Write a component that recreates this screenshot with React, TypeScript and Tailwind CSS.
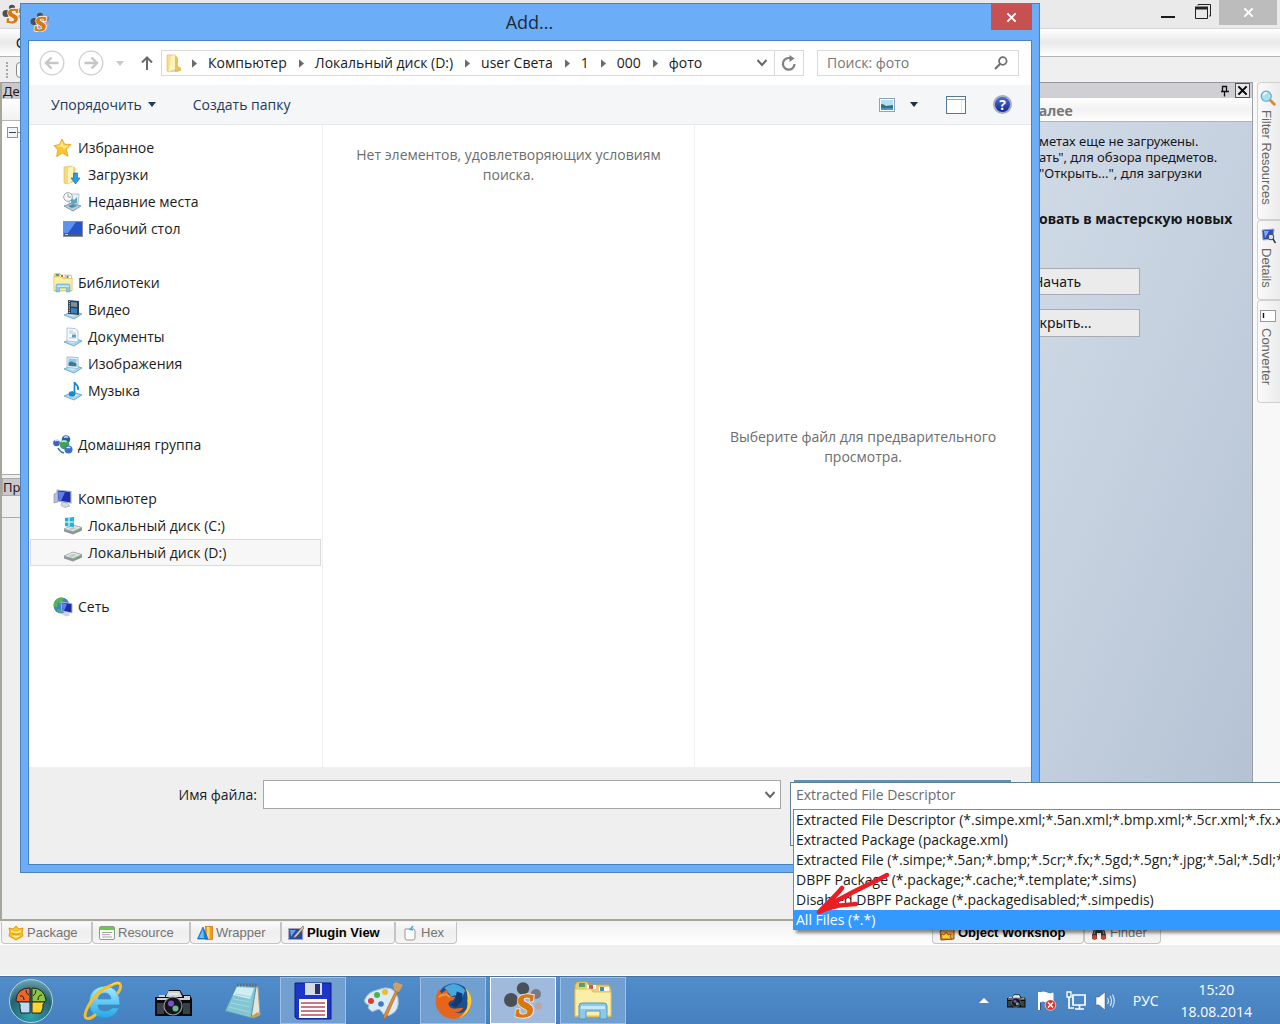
import React from "react";

type IconProps = { className?: string };

function SimpeLogo({ className = "size-5", compact }: IconProps & { compact?: boolean }) {
  return (
    <svg viewBox="0 0 40 40" className={className} aria-hidden="true">
      <circle cx="20" cy="7.500" r="6.200" fill="#4b4f58" />
      <circle cx="8" cy="19" r="7" fill="#4b4f58" />
      <circle cx="33" cy="13" r="5" fill="#747a86" />
      <circle cx="35.500" cy="25" r="3.500" fill="#b9a7a0" />
      <text
        x={compact ? 21 : 22}
        y={compact ? 37 : 36}
        textAnchor="middle"
        fontFamily="Liberation Serif, serif"
        fontWeight="bold"
        fontStyle="italic"
        fontSize={compact ? 44 : 34}
        fill="#d9780f"
        stroke="#fff3e2"
        strokeWidth={compact ? 5 : 3}
        paintOrder="stroke"
      >
        S
      </text>
      <text
        x={compact ? 21 : 22}
        y={compact ? 37 : 36}
        textAnchor="middle"
        fontFamily="Liberation Serif, serif"
        fontWeight="bold"
        fontStyle="italic"
        fontSize={compact ? 44 : 34}
        fill="#d9780f"
        stroke="#d9780f"
        strokeWidth="1.500"
      >
        S
      </text>
    </svg>
  );
}

function FolderIcon({ className = "size-5" }: IconProps) {
  return (
    <svg viewBox="0 0 20 20" className={className} aria-hidden="true">
      <path d="M3 2h8l2 2v12l-8 3-2-1z" fill="#f6e08c" stroke="#d9bb55" strokeWidth=".6" />
      <path d="M7 3l4-1v14l-6 3z" fill="#fdf3bd" />
      <path d="M11 3l3 2v8l3 2v3l-6 1z" fill="#e5c45d" />
      <path d="M5 18l8-1 3 1-7 1z" fill="#b9b29a" opacity=".6" />
    </svg>
  );
}

function StarIcon() {
  return (
    <svg viewBox="0 0 20 20" className="size-5" aria-hidden="true">
      <path d="M9 1l2.600 5.200 6.400.3-4.600 4.800 1.600 7L9.400 15 3.600 18.600 4.800 11.700 1 7.600l5.400-1z" fill="#ffc62e" stroke="#e79a1f" strokeWidth=".8" />
      <path d="M9 3l1.700 4.500 5 .2-4 3L9 9 3 8l4-.7z" fill="#ffe88d" />
    </svg>
  );
}

function DownloadsIcon() {
  return (
    <svg viewBox="0 0 20 20" className="size-5" aria-hidden="true">
      <path d="M1 2l8-1 3 2v13l-8 3-3-1z" fill="#f3da80" stroke="#d8bc60" strokeWidth=".6" />
      <path d="M5 3l5-2v14l-5 4z" fill="#fdf2b8" />
      <path d="M10.500 8h4v5h2.500l-4.500 6L8 13h2.500z" fill="#2f9be0" stroke="#1c6fb4" strokeWidth=".7" />
    </svg>
  );
}

function RecentIcon() {
  return (
    <svg viewBox="0 0 20 20" className="size-5" aria-hidden="true">
      <path d="M7 2h9l-1 10H6z" fill="#eaf2f7" stroke="#9db4c3" strokeWidth=".8" />
      <path d="M8 5l3 3 3-3v6H8z" fill="#5da5bd" />
      <path d="M1 14l8-3 9 3-8 5z" fill="#b4cddb" stroke="#71889a" strokeWidth=".8" />
      <path d="M5 14l5-2 4 2-5 2z" fill="#4a90a7" />
      <circle cx="5" cy="5" r="4.300" fill="#f7fafc" stroke="#97a3ac" />
      <path d="M5 2v3h3" fill="none" stroke="#7c8790" strokeWidth=".8" />
    </svg>
  );
}

function DesktopIcon() {
  return (
    <svg viewBox="0 0 20 20" className="size-5" aria-hidden="true">
      <rect x=".5" y="2.500" width="19" height="15" fill="#2456c9" stroke="#8794a6" />
      <path d="M1 3h12L5 14H1z" fill="#5b93ee" />
      <path d="M1 14.500h18V17H1z" fill="#48597a" />
      <path d="M2 15.500h3" stroke="#c5d7f0" />
    </svg>
  );
}

function LibrariesIcon({ className = "size-5" }: IconProps) {
  return (
    <svg viewBox="0 0 40 40" className={className} aria-hidden="true">
      <path d="M2 4l2-3h10l2 3h20l2 4v28H2z" fill="#e9cf70" stroke="#c9a94a" />
      <path d="M6 2h6v4H6z" fill="#4fa36a" />
      <path d="M14 4h9v4h-9zM26 6h10v4H26z" fill="#fff" />
      <path d="M16 4h4v4h-4z" fill="#d4574a" />
      <path d="M27 6h4v4h-4z" fill="#4d86c9" />
      <path d="M2 8h16l2 3h18v24H2z" fill="#fbeea6" stroke="#dcc063" />
      <path d="M6 38V25q0-3 3-3h22q3 0 3 3v13h-7v-8H13v8z" fill="#8cc8ea" stroke="#4f9cc8" />
      <path d="M8 25h24v3H8z" fill="#c9e9fa" />
    </svg>
  );
}

function Tray({ children }: { children: React.ReactNode }) {
  return (
    <svg viewBox="0 0 20 20" className="size-5" aria-hidden="true">
      <path d="M1 15l9-4 9 3-8 5z" fill="#a9d8ee" stroke="#5f9fbf" strokeWidth=".8" />
      <path d="M5 15l6-2 4 1-5 2z" fill="#ddf2fb" />
      {children}
    </svg>
  );
}

function VideoIcon() {
  return (
    <Tray>
      <path d="M5 0l11 1v14L5 14z" fill="#31404f" />
      <path d="M8 2l6 .5V7L8 6.500z" fill="#4c9de0" />
      <path d="M8 8l6 .5v5L8 13z" fill="#3c7fbf" />
      <path d="M8 5l3-1 3 2v1z" fill="#c77a3c" />
      <path d="M6.300 1v13" stroke="#e6ecf1" strokeDasharray="1 1.200" />
    </Tray>
  );
}

function DocumentsIcon() {
  return (
    <Tray>
      <path d="M4 1l8 .5 3 2.500v11L4 14z" fill="#f8fbfd" stroke="#9eb6c8" strokeWidth=".8" />
      <path d="M6 4h4M6 6h7M6 11h7" stroke="#9fb6c9" strokeWidth=".8" />
      <path d="M9 7.500h4v3H9z" fill="#5f9ad4" />
    </Tray>
  );
}

function PicturesIcon() {
  return (
    <Tray>
      <path d="M4 3l11 .5v11L4 13.500z" fill="#edf5fa" stroke="#8fb0c6" strokeWidth=".8" />
      <path d="M5.500 4.500l8 .4v4l-8-.4z" fill="#8fc6ef" />
      <path d="M5.500 8.500l3-1 5 2v3l-8-.5z" fill="#3b7a8a" />
    </Tray>
  );
}

function MusicIcon() {
  return (
    <Tray>
      <ellipse cx="9" cy="13" rx="3.300" ry="2.800" fill="#2186d0" />
      <path d="M11.500 13V1c1 3 5 3.500 3.500 8" fill="none" stroke="#2186d0" strokeWidth="1.700" />
    </Tray>
  );
}

function HomegroupIcon() {
  return (
    <svg viewBox="0 0 20 20" className="size-5" aria-hidden="true">
      <circle cx="3.500" cy="8" r="3.300" fill="#3b64c4" />
      <circle cx="13" cy="4.500" r="4.200" fill="#2d55b5" />
      <circle cx="11.500" cy="9.500" r="4.800" fill="#43a352" />
      <circle cx="15.500" cy="14.500" r="4" fill="#3b6fcb" />
      <path d="M2 6q2-2 3.500 0M11 2.500q2-1.500 4 0M8.500 7q2.500-2 5 0M13.500 13q2-1.500 4 0" fill="none" stroke="#cfe4ff" strokeWidth="1.300" />
      <path d="M5 13q2 4 6 5" fill="none" stroke="#3b6fcb" strokeWidth="1.500" />
    </svg>
  );
}

function ComputerIcon() {
  return (
    <svg viewBox="0 0 20 20" className="size-5" aria-hidden="true">
      <path d="M1 5l4-2v10l-4 1z" fill="#b8bfd0" stroke="#868da2" strokeWidth=".6" />
      <path d="M4 1L18 2.500v11.500L5 12z" fill="#1d2fb0" stroke="#aab4cc" strokeWidth="1.200" />
      <path d="M5 2.500l7 .8L8 12l-2-.3z" fill="#5b80ea" />
      <path d="M9 13l5 1 3 3-5 1.500-4-2z" fill="#d5dae4" stroke="#969db0" strokeWidth=".6" />
    </svg>
  );
}

function DriveIcon({ system }: { system?: boolean }) {
  return (
    <svg viewBox="0 0 20 20" className="size-5" aria-hidden="true">
      <path d="M1 13l9-4 9 2.500v3L10 18.500l-9-3z" fill="#8f9898" />
      <path d="M1 13l9-4 9 2.500L10 15.500z" fill="#e4e8e8" stroke="#98a0a0" strokeWidth=".7" />
      <path d="M5 13l5-2 4 1-5 2z" fill="#bfc6c6" />
      <path d="M13 15.500l4-1.500" stroke="#49b957" />
      {system && <path d="M2 2l3.500-.5V5.500H2zM6.500 1.400L11 1v4.500H6.500zM2 6.500h3.500v4L2 10zM6.500 6.500H11V11l-4.500-.4z" fill="#19b4e6" />}
    </svg>
  );
}

function NetworkIcon() {
  return (
    <svg viewBox="0 0 20 20" className="size-5" aria-hidden="true">
      <circle cx="8.500" cy="8.500" r="8" fill="#3d86c6" />
      <path d="M2 4q4-5 9-3l-2 4-4 1-1 4-3 0q-1-3 1-6zM5 12l4 1v3q-3 0-5-2z" fill="#55b553" />
      <path d="M8 5l11 1.500v9.500L9 14z" fill="#1c2eae" stroke="#b5bed4" />
      <path d="M9 6l5 1-3 7-1.500-.3z" fill="#5d80e8" />
      <path d="M11 15l5 1 1 2.500-4 1-4-2z" fill="#cfd5e0" />
    </svg>
  );
}

function Chevron() {
  return (
    <svg viewBox="0 0 6 10" className="h-[9px] w-[5px] shrink-0" aria-hidden="true">
      <path d="M0 0l6 5-6 5z" fill="#6b6b6b" />
    </svg>
  );
}

function DownChevron() {
  return (
    <svg viewBox="0 0 12 8" className="h-2 w-3 shrink-0" aria-hidden="true">
      <path d="M1.500 1L6 6l4.500-5" fill="none" stroke="#666" strokeWidth="1.900" />
    </svg>
  );
}

function RoundArrow({ flip, label }: { flip?: boolean; label: string }) {
  return (
    <button aria-label={label} className="shrink-0">
      <svg viewBox="0 0 26 26" className="size-[26px]" aria-hidden="true">
        <circle cx="13" cy="13" r="11.800" fill="#fff" stroke="#cfcfcf" strokeWidth="1.300" />
        <path
          d={flip ? "M6.500 13H19M13.500 7.500L19 13l-5.500 5.500" : "M19.500 13H7M12.500 7.500L7 13l5.500 5.500"}
          fill="none"
          stroke="#c6c6c6"
          strokeWidth="2.400"
        />
      </svg>
    </button>
  );
}

function CloseGlyph({ color }: { color: string }) {
  return (
    <svg viewBox="0 0 12 12" className="size-[11px]" aria-hidden="true">
      <path d="M1.500 1.500l9 9M10.500 1.500l-9 9" stroke={color} strokeWidth="2.200" />
    </svg>
  );
}

function TreeItem({ icon, label, child, selected }: { icon: React.ReactNode; label: string; child?: boolean; selected?: boolean }) {
  return (
    <li>
      <button
        className={`flex h-[27px] w-full items-center gap-[5px] border text-left ${selected ? "border-[#dadada] bg-[#f7f7f7]" : "border-transparent"} ${child ? "pl-8" : "pl-[22px]"}`}
      >
        {icon}
        <span className="whitespace-nowrap">{label}</span>
      </button>
    </li>
  );
}

function NavTree() {
  return (
    <nav className="w-[294px] shrink-0 border-r border-[#f0f0f0] pt-[9px] pr-px pl-px">
      <ul className="flex flex-col gap-[27px] text-sm text-[#1b1b1b]">
        <li>
          <ul>
            <TreeItem icon={<StarIcon />} label="Избранное" />
            <TreeItem child icon={<DownloadsIcon />} label="Загрузки" />
            <TreeItem child icon={<RecentIcon />} label="Недавние места" />
            <TreeItem child icon={<DesktopIcon />} label="Рабочий стол" />
          </ul>
        </li>
        <li>
          <ul>
            <TreeItem icon={<LibrariesIcon />} label="Библиотеки" />
            <TreeItem child icon={<VideoIcon />} label="Видео" />
            <TreeItem child icon={<DocumentsIcon />} label="Документы" />
            <TreeItem child icon={<PicturesIcon />} label="Изображения" />
            <TreeItem child icon={<MusicIcon />} label="Музыка" />
          </ul>
        </li>
        <li>
          <ul>
            <TreeItem icon={<HomegroupIcon />} label="Домашняя группа" />
          </ul>
        </li>
        <li>
          <ul>
            <TreeItem icon={<ComputerIcon />} label="Компьютер" />
            <TreeItem child icon={<DriveIcon system />} label="Локальный диск (C:)" />
            <TreeItem child selected icon={<DriveIcon />} label="Локальный диск (D:)" />
          </ul>
        </li>
        <li>
          <ul>
            <TreeItem icon={<NetworkIcon />} label="Сеть" />
          </ul>
        </li>
      </ul>
    </nav>
  );
}

const crumbs = ["Компьютер", "Локальный диск (D:)", "user Света", "1", "000", "фото"];

function AddressRow() {
  return (
    <div className="flex h-11 shrink-0 items-center pr-3 pl-[10px]">
      <RoundArrow label="Назад" />
      <div className="w-[13px]" />
      <RoundArrow flip label="Вперед" />
      <button aria-label="Последние расположения" className="ml-3">
        <svg viewBox="0 0 8 5" className="h-[5px] w-2" aria-hidden="true">
          <path d="M0 0h8L4 5z" fill="#c9c9c9" />
        </svg>
      </button>
      <button aria-label="Вверх" className="ml-4">
        <svg viewBox="0 0 14 16" className="h-4 w-[14px]" aria-hidden="true">
          <path d="M7 15V2.500M2 7.500l5-5 5 5" fill="none" stroke="#6a6a6a" strokeWidth="2" />
        </svg>
      </button>
      <div className="ml-[7px] flex h-[26px] min-w-0 flex-1 items-center border border-[#d9d9d9] bg-white pl-[2px]">
        <FolderIcon />
        <ol className="ml-2 flex min-w-0 flex-1 items-center gap-3 text-sm whitespace-nowrap text-[#1b1b1b]">
          {crumbs.map((c) => (
            <li key={c} className="flex items-center gap-[11px]">
              <Chevron />
              <button>{c}</button>
            </li>
          ))}
        </ol>
        <button aria-label="Предыдущие расположения" className="flex w-6 justify-center">
          <DownChevron />
        </button>
        <button aria-label="Обновить" className="flex h-full w-[29px] items-center justify-center border-l border-[#d9d9d9]">
          <svg viewBox="0 0 16 18" className="h-[18px] w-4" aria-hidden="true">
            <path d="M10 4.500A5.800 5.800 0 1 0 13.500 10" fill="none" stroke="#808080" strokeWidth="2.200" />
            <path d="M8.500 8V1l5 3.500z" fill="#808080" />
          </svg>
        </button>
      </div>
      <label className="ml-[13px] flex h-[26px] w-[202px] shrink-0 items-center border border-[#d9d9d9] pr-[10px] pl-[9px]">
        <input aria-label="Поиск" placeholder="Поиск: фото" className="min-w-0 flex-1 bg-transparent text-sm outline-none placeholder:text-[#767676]" />
        <svg viewBox="0 0 14 14" className="size-[14px]" aria-hidden="true">
          <circle cx="8.800" cy="5" r="3.800" fill="none" stroke="#6f6f6f" strokeWidth="1.700" />
          <path d="M6 8l-5 5" stroke="#6f6f6f" strokeWidth="2.200" />
        </svg>
      </label>
    </div>
  );
}

function CommandBar() {
  return (
    <div className="flex h-10 shrink-0 items-center border-b border-[#e6e9ec] bg-[#f5f6f8] pr-[19px] pl-[22px] text-sm text-[#1e395b]">
      <button className="flex items-center gap-[6px]">
        Упорядочить
        <svg viewBox="0 0 8 5" className="h-[5px] w-2" aria-hidden="true">
          <path d="M0 0h8L4 5z" fill="#1e395b" />
        </svg>
      </button>
      <button className="ml-[37px]">Создать папку</button>
      <div className="flex-1" />
      <button aria-label="Изменить представление">
        <svg viewBox="0 0 16 14" className="h-[14px] w-4" aria-hidden="true">
          <rect x=".5" y=".5" width="15" height="13" fill="#fff" stroke="#8ea5b8" />
          <rect x="2" y="2" width="12" height="10" fill="#b5dff3" />
          <path d="M2 6q3 0 5 2l7-1v3H2z" fill="#2f7380" />
          <path d="M2 10h12v2H2z" fill="#4f93cc" />
        </svg>
      </button>
      <button aria-label="Дополнительно" className="ml-[15px]">
        <svg viewBox="0 0 8 5" className="h-[5px] w-2" aria-hidden="true">
          <path d="M0 0h8L4 5z" fill="#1e2f45" />
        </svg>
      </button>
      <button aria-label="Область просмотра" className="ml-7">
        <svg viewBox="0 0 20 18" className="h-[18px] w-5" aria-hidden="true">
          <rect x=".5" y=".5" width="19" height="17" fill="#fff" stroke="#55788f" />
          <path d="M1 3.500h18" stroke="#8ba7ba" />
          <path d="M15.500 4v13" stroke="#dbe8f0" />
        </svg>
      </button>
      <button aria-label="Справка" className="ml-[27px] flex size-[19px] items-center justify-center rounded-full border-2 border-[#a5adc4] bg-gradient-to-b from-[#4c6fd6] to-[#15278f] text-sm leading-none font-bold text-white">
        ?
      </button>
    </div>
  );
}

function AddDialog() {
  return (
    <section role="dialog" aria-label="Add..." className="absolute top-[3px] right-[240px] bottom-[151px] left-5 z-10 flex flex-col border border-[#4a82bf] bg-[#6badf6] px-[7px] pb-[7px] font-['Open_Sans',sans-serif]">
      <header className="flex h-9 shrink-0 items-center">
        <div className="flex w-10 items-center pl-[2px]">
          <SimpeLogo compact className="size-5" />
        </div>
        <h1 className="flex-1 text-center text-lg text-[#1c2b3c]">Add...</h1>
        <button aria-label="Закрыть" className="flex h-[26px] w-[41px] items-center justify-center self-start bg-[#c75050]">
          <CloseGlyph color="#fff" />
        </button>
      </header>
      <div className="flex min-h-0 flex-1 flex-col border border-[#4a82bf] bg-white">
        <AddressRow />
        <CommandBar />
        <div className="flex min-h-0 flex-1 text-sm">
          <NavTree />
          <div className="flex-1 border-r border-[#f0f0f0] px-6 pt-5 text-center leading-5 text-[#6d6d6d]">
            Нет элементов, удовлетворяющих условиям поиска.
          </div>
          <div className="flex w-[336px] shrink-0 items-center px-8 pt-[2px] text-center leading-5 text-[#6d6d6d]">
            <p className="w-full">Выберите файл для предварительного просмотра.</p>
          </div>
        </div>
        <footer className="flex h-[97px] shrink-0 items-start bg-[#efefef] pt-[13px]">
          <label htmlFor="filename" className="w-[234px] pr-[6px] text-right text-sm leading-[29px] text-[#1b1b1b]">
            Имя файла:
          </label>
          <div className="flex h-[29px] flex-1 items-center border border-[#a5a8ab] bg-white pr-1">
            <input id="filename" className="h-full min-w-0 flex-1 px-1 text-sm outline-none" />
            <button aria-label="Показать список">
              <DownChevron />
            </button>
          </div>
          <div className="mr-5 ml-[13px] h-7 w-[217px] border-t-2 border-[#5b93b8]" />
        </footer>
      </div>
    </section>
  );
}

const filters = [
  "Extracted File Descriptor (*.simpe.xml;*.5an.xml;*.bmp.xml;*.5cr.xml;*.fx.xml",
  "Extracted Package (package.xml)",
  "Extracted File (*.simpe;*.5an;*.bmp;*.5cr;*.fx;*.5gd;*.5gn;*.jpg;*.5al;*.5dl;*.5p",
  "DBPF Package (*.package;*.cache;*.template;*.sims)",
  "Disabled DBPF Package (*.packagedisabled;*.simpedis)",
  "All Files (*.*)",
];

function FilterPopup() {
  return (
    <div className="absolute right-0 bottom-[94px] z-20 w-[490px] font-['Open_Sans',sans-serif] text-sm">
      <div className="absolute top-0 left-0 h-16 w-3 border border-r-0 border-[#5e8290] bg-[#efefef]" />
      <select aria-label="Тип файлов" className="relative block h-[27px] w-full appearance-none border-t border-l border-[#5e8290] bg-white pb-[3px] pl-[5px] text-[#6b6b6b] outline-none">
        <option>Extracted File Descriptor</option>
      </select>
      <ul role="listbox" className="relative ml-[3px] overflow-hidden border-t border-l border-[#5a98a8] bg-white text-[#1b1b1b] shadow-[3px_3px_3px_rgba(0,0,0,0.45)]">
        {filters.map((f, i) => (
          <li
            key={f}
            role="option"
            aria-selected={i === 5}
            className={`h-5 pl-[2px] leading-5 whitespace-nowrap ${i === 5 ? "bg-[#3399ff] text-white" : ""}`}
          >
            {f}
          </li>
        ))}
      </ul>
      <svg viewBox="0 0 76 46" className="absolute top-[89px] left-[25px] h-[46px] w-[76px]" aria-hidden="true">
        <path d="M72 4C50 16 28 24 4 41M27 17C20 26 12 32 4 41M4 41C18 34 30 34 41 33" fill="none" stroke="#ed1c24" strokeWidth="4.500" strokeLinecap="round" strokeLinejoin="round" />
      </svg>
    </div>
  );
}

function PackageIcon() {
  return (
    <svg viewBox="0 0 16 16" className="size-4" aria-hidden="true">
      <path d="M8 1l3 3 4-1-1 4 1 4-7 4-7-4 1-4-1-4 4 1z" fill="#ffbf1c" stroke="#d98a10" strokeWidth=".8" />
      <path d="M3 6l5 2 5-2M5 11l3 1 3-1" stroke="#fff08a" fill="none" strokeWidth="1.500" />
      <path d="M4 9h8" stroke="#e08a10" />
    </svg>
  );
}
function ResourceIcon() {
  return (
    <svg viewBox="0 0 16 16" className="size-4" aria-hidden="true">
      <rect x=".5" y="1.500" width="15" height="13" rx="1.500" fill="#fff" stroke="#8b9a8b" />
      <path d="M1 2h14v3H1z" fill="#63cf3c" />
      <path d="M3 7.500h10M3 12h10" stroke="#92b08c" />
      <path d="M3 9.700h8" stroke="#c28db4" />
    </svg>
  );
}
function WrapperIcon() {
  return (
    <svg viewBox="0 0 16 16" className="size-4" aria-hidden="true">
      <rect x="8.500" y="1.500" width="7" height="13" fill="#f39b1d" stroke="#c9720c" strokeWidth=".7" />
      <path d="M10 2h2.500v12H10z" fill="#ffd671" />
      <path d="M6 2l5 12H.5z" fill="#1c7fd8" stroke="#1565b0" strokeWidth=".7" />
      <path d="M6 4l1 9H2z" fill="#6cc0f5" />
    </svg>
  );
}
function PluginIcon() {
  return (
    <svg viewBox="0 0 16 16" className="size-4" aria-hidden="true">
      <rect x=".7" y="3.500" width="14" height="11" fill="#2447a8" stroke="#9fa8b4" />
      <path d="M2 5h6l-5 7z" fill="#6f9df0" />
      <path d="M15 1L7 10l-2 3 3-1 8-9z" fill="#e8cf9d" stroke="#76654a" strokeWidth=".7" />
    </svg>
  );
}
function HexIcon() {
  return (
    <svg viewBox="0 0 16 16" className="size-4" aria-hidden="true">
      <path d="M3 4h9l1 2v7q0 2-2 2H5q-2 0-2-2z" fill="#fdfdfd" stroke="#9a9a9a" />
      <path d="M8 5l3-4M7 4l4 1" stroke="#4bb4d8" strokeWidth="1.800" />
    </svg>
  );
}
function WorkshopIcon() {
  return (
    <svg viewBox="0 0 16 16" className="size-4" aria-hidden="true">
      <path d="M1 6l8-4 6 1v11l-13 1z" fill="#dba85a" stroke="#7a5524" />
      <path d="M2 9l3 1 2-3 2 3 3-1-1 3 2 2H2l1-2z" fill="#ffd428" stroke="#b8341c" strokeWidth=".8" />
    </svg>
  );
}
function FinderIcon() {
  return (
    <svg viewBox="0 0 16 16" className="size-4" aria-hidden="true">
      <path d="M4 1h3v4h2V1h3l3 9v4h-5V8H6v6H1v-4z" fill="#3a3437" />
      <circle cx="3.500" cy="12.500" r="2.400" fill="#c9482c" />
      <circle cx="12.500" cy="12.500" r="2.400" fill="#c9482c" />
      <path d="M5 3l-2 6M11 3l2 6" stroke="#8fa0b5" />
    </svg>
  );
}

function DockTab({ icon, label, active, className = "" }: { icon: React.ReactNode; label: string; active?: boolean; className?: string }) {
  return (
    <button
      className={`flex h-[22px] items-center gap-[3px] rounded-b-sm border border-t-0 border-[#c4c4c0] bg-gradient-to-b from-[#fafafa] via-[#eeeeee] to-[#f5f5f5] pl-[6px] text-[13px] whitespace-nowrap ${active ? "font-bold text-black" : "text-[#747474]"} ${className}`}
    >
      {icon}
      {label}
    </button>
  );
}

function SideTab({ icon, label, className }: { icon: React.ReactNode; label: string; className: string }) {
  return (
    <button className={`flex w-full flex-col items-center gap-1 rounded-l-sm border border-r-0 border-[#d0d0d0] bg-gradient-to-r from-[#fafafa] to-[#ececec] pt-[7px] pr-[2px] text-[13px] text-[#666] ${className}`}>
      {icon}
      <span className="mr-1 [writing-mode:vertical-rl]">{label}</span>
    </button>
  );
}

function AppWindow() {
  return (
    <main className="flex flex-1 flex-col bg-[#efefef] font-['Liberation_Sans',sans-serif]">
      <header className="flex h-7 items-start justify-between bg-[#eaeaea] pr-[3px] pl-[2px]">
        <SimpeLogo compact className="mt-1 size-5" />
        <div className="flex items-start">
          <button aria-label="Свернуть" className="mt-[16px] mr-5 h-[2px] w-[14px] bg-[#1a1a1a]" />
          <button aria-label="Восстановить" className="mt-1 mr-2">
            <svg viewBox="0 0 16 16" className="size-4" aria-hidden="true">
              <path d="M3 1.500V.5h12.500V12H14" fill="none" stroke="#222" />
              <path d="M.5 3.500h12v11H.5z" fill="none" stroke="#222" />
              <path d="M0 2.500h13v3H0z" fill="#222" />
            </svg>
          </button>
          <button aria-label="Закрыть окно" className="flex h-[25px] w-[58px] items-center justify-center bg-[#bcbcbc]">
            <CloseGlyph color="#fff" />
          </button>
        </div>
      </header>
      <div className="flex h-[29px] items-center border-t border-b border-t-[#d6d6d6] border-b-[#b1b5ba] bg-gradient-to-b from-white via-[#e9e9e9] to-white pl-4 text-sm text-[#222]">
        <button>О</button>
      </div>
      <div className="flex h-[25px] items-center gap-2 pl-[6px]">
        <div className="h-4 border-l-2 border-dotted border-[#a8a8a8]" />
        <div className="h-4 w-6 rounded-sm border border-[#888] bg-white" />
      </div>
      <div className="flex flex-1 overflow-hidden">
        <div className="flex w-[932px] shrink-0 flex-col border-r border-b-2 border-l-2 border-[#a8a69c] font-['Noto_Sans',sans-serif] text-[13px] text-[#1a1a1a]">
          <h2 className="h-[17px] border-t border-[#97979c] bg-[#cbc8cc] pl-px leading-4">Дерево</h2>
          <div className="h-[22px] border-b border-[#b5b5b5] bg-gradient-to-b from-white to-[#f1f1f1]" />
          <div className="h-[354px] border-b border-[#a9a9a9] bg-white pt-[6px] pl-[5px]">
            <div className="flex items-center">
              <button aria-label="Свернуть ветвь" className="flex size-[11px] items-center justify-center border border-[#8595a8] bg-[#f2f4f8]">
                <span className="h-px w-[7px] bg-[#334455]" />
              </button>
              <span className="w-6 border-t border-dotted border-[#888]" />
            </div>
          </div>
          <div className="h-[3px]" />
          <h2 className="h-[18px] border border-[#aaa] bg-[#cbc8cc] leading-4">Просмотр</h2>
          <div className="h-[22px] border-b border-[#aaa] bg-[#efefef]" />
        </div>
        <div className="flex min-w-0 flex-1 flex-col border-r border-[#9b9ea5]">
          <h2 className="flex h-4 shrink-0 items-center justify-end gap-1 border-t border-[#97979c] bg-[#cfcfd4] pr-[2px]">
            <svg viewBox="0 0 12 12" className="size-3" aria-hidden="true">
              <path d="M3.500 1.500h4v5h-4zM7.500 1.500v5M2 6.500h8M5.500 7v4.500" fill="none" stroke="#111" strokeWidth="1.300" />
            </svg>
            <button aria-label="Закрыть панель" className="flex h-[15px] w-[15px] items-center justify-center border border-[#555] bg-[#e8e8ea]">
              <CloseGlyph color="#000" />
            </button>
          </h2>
          <div className="h-6 shrink-0 border-b border-[#a8b4c4] bg-gradient-to-b from-white via-[#f2f2f2] to-white pl-24 font-['Open_Sans',sans-serif] text-sm leading-[26px] font-bold text-[#777]">
            Далее
          </div>
          <div className="flex-1 bg-gradient-to-br from-[#d5dfeb] via-[#c6d1df] to-[#b0bfd1] pt-[11px] pl-[107px] font-['Noto_Sans',sans-serif] text-sm whitespace-nowrap text-[#15181c]">
            <div className="text-[13px] leading-4">
              <p>метах еще не загружены.</p>
              <p>ать", для обзора предметов.</p>
              <p>"Открыть...", для загрузки</p>
            </div>
            <p className="mt-[28px] leading-5 font-bold">овать в мастерскую новых</p>
            <div className="mt-[39px] -ml-[61px] flex w-[162px] flex-col gap-[14px]">
              <button className="h-[27px] border border-[#a9adb3] bg-[#ebebeb] pr-1">Начать</button>
              <button className="h-7 border border-[#a9adb3] bg-[#ebebeb] pr-1">Открыть...</button>
            </div>
          </div>
        </div>
        <aside className="w-[27px] shrink-0 bg-[#f8f8f8] pl-1">
          <SideTab
            className="h-[138px]"
            label="Filter Resources"
            icon={
              <svg viewBox="0 0 18 18" className="size-4 shrink-0" aria-hidden="true">
                <path d="M11 11l6 6" stroke="#d98a2b" strokeWidth="3" />
                <circle cx="7" cy="7" r="5.700" fill="#a5e2f6" stroke="#6aa6c3" strokeWidth="1.300" />
                <path d="M4 6q1-3 4-3" fill="none" stroke="#fff" strokeWidth="1.500" />
              </svg>
            }
          />
          <SideTab
            className="h-20"
            label="Details"
            icon={
              <svg viewBox="0 0 16 16" className="size-4 shrink-0" aria-hidden="true">
                <path d="M2 2l12-1-1 10-10 1z" fill="#2b50bd" stroke="#9aa9c0" />
                <path d="M4 3h5l-4 7z" fill="#86aaf0" />
                <circle cx="11" cy="9" r="2.800" fill="#cfe4f6" stroke="#444455" />
                <path d="M13 11l2.500 4" stroke="#333" strokeWidth="1.500" />
              </svg>
            }
          />
          <SideTab
            className="h-[103px]"
            label="Converter"
            icon={
              <svg viewBox="0 0 16 12" className="my-[2px] h-3 w-4 shrink-0" aria-hidden="true">
                <rect x=".5" y=".5" width="15" height="11" fill="#fff" stroke="#999" />
                <path d="M3.500 3v5" stroke="#111" strokeWidth="1.400" />
              </svg>
            }
          />
        </aside>
      </div>
      <div className="flex h-6 items-start bg-gradient-to-b from-[#f1f1f1] to-white pt-px pl-px">
        <div className="flex w-[931px]">
          <DockTab className="w-[91px]" icon={<PackageIcon />} label="Package" />
          <DockTab className="w-[98px]" icon={<ResourceIcon />} label="Resource" />
          <DockTab className="w-[91px]" icon={<WrapperIcon />} label="Wrapper" />
          <DockTab className="w-[114px]" active icon={<PluginIcon />} label="Plugin View" />
          <DockTab className="w-[62px]" icon={<HexIcon />} label="Hex" />
        </div>
        <DockTab className="w-[152px]" active icon={<WorkshopIcon />} label="Object Workshop" />
        <DockTab className="w-[77px]" icon={<FinderIcon />} label="Finder" />
      </div>
      <div className="h-[31px] border-b border-white bg-[#efefef]" />
    </main>
  );
}

function CameraIcon({ className }: IconProps) {
  return (
    <svg viewBox="0 0 40 28" className={className} aria-hidden="true">
      <path d="M2 8h4l1-2h6l3-5h11l3 5h7l2 4v17H2z" fill="#0b0b0b" />
      <path d="M4 10h33M16 3h10l2 4H14zM6 7h6M31 8h6" stroke="#cfd3d6" strokeWidth="1.800" fill="#e4e6e8" />
      <path d="M4 14h7v11H4zM30 14h7v11h-7z" fill="#384048" />
      <circle cx="20" cy="17" r="9" fill="#15161c" stroke="#8f979d" strokeWidth="1.200" />
      <circle cx="18" cy="14.500" r="3" fill="#7b4fd0" />
      <circle cx="22.500" cy="19.500" r="3" fill="#69b892" />
    </svg>
  );
}

function StartIcon() {
  return (
    <svg viewBox="0 0 46 46" className="mr-1 size-[46px]" aria-hidden="true">
      <defs>
        <radialGradient id="orb" cx=".5" cy=".85" r=".9">
          <stop offset="0" stopColor="#2fa2ad" />
          <stop offset=".6" stopColor="#26626f" />
          <stop offset="1" stopColor="#7fb3bd" />
        </radialGradient>
      </defs>
      <circle cx="23" cy="23" r="21.500" fill="url(#orb)" stroke="#a9d6e4" />
      <path d="M22 10Q9 10 8 22q0 2 3 2h11z" fill="#f0642a" stroke="#1b2422" />
      <path d="M24 10q12 0 14 12 0 2-3 2H24z" fill="#8dc63c" stroke="#1b2422" />
      <path d="M22 24H10q3 2 2 6l1 5h9z" fill="#b9daf0" stroke="#1b2422" />
      <path d="M24 24h13q-3 2-2 6l-2 5h-9z" fill="#ffd42f" stroke="#1b2422" />
      <path d="M12 18q4-1 4 4M18 12q0 4 3 5M28 12q0 4-3 6M34 17q-4 0-4 5" fill="none" stroke="#1b2422" />
    </svg>
  );
}

function IeIcon() {
  return (
    <svg viewBox="0 0 42 42" className="size-[42px]" aria-hidden="true">
      <defs>
        <linearGradient id="ie" x1="0" y1="0" x2="0" y2="1">
          <stop offset="0" stopColor="#a8ecff" />
          <stop offset="1" stopColor="#25a5e8" />
        </linearGradient>
      </defs>
      <path d="M38 25H16q0 6 7 6 5 0 7-3h7q-4 10-15 10Q7 37 7 22 8 7 23 6q15 1 15 19zM16 19h13q-1-6-6-6-6 0-7 6z" fill="url(#ie)" stroke="#2894cc" strokeWidth=".7" />
      <path d="M29 5.500q7-4 9-1.500 2 3-2 9M29 5.500Q16 10 8 23 1 35 4 38q3 2 9-3" fill="none" stroke="#f5bf25" strokeWidth="3" strokeLinecap="round" />
      <path d="M29 5q7-4 9-1" fill="none" stroke="#ffe67a" />
    </svg>
  );
}

function NotepadIcon() {
  return (
    <svg viewBox="0 0 40 40" className="size-10" aria-hidden="true">
      <path d="M15 5l20 1 2 28-7 3z" fill="#e6e5da" stroke="#9c9c93" />
      <path d="M14 4l19 2-5 31L2 30z" fill="#83c5d3" stroke="#4f94a8" />
      <path d="M14 6l17 1-4 11L10 14z" fill="#d1edf2" />
      <path d="M12 13l17 3M10 18l18 3M8 22l19 4M6 26l20 5" stroke="#a3d6e0" />
      <path d="M14 4h21" stroke="#636b6f" strokeWidth="3" strokeDasharray="1.500 1.500" />
      <path d="M30 37l-3-1 8-5 2 3z" fill="#c9a14a" />
    </svg>
  );
}

function FloppyIcon() {
  return (
    <svg viewBox="0 0 38 38" className="size-[38px]" aria-hidden="true">
      <path d="M1 1h36v36H3l-2-2z" fill="#1c37c8" stroke="#0c1c80" />
      <path d="M11 1h17v12H11z" fill="#d7dbe4" />
      <path d="M21 2h5v10h-5z" fill="#26326f" />
      <path d="M5 17h28v19H5z" fill="#fff" />
      <path d="M7 21h24M7 25h24M7 29h24M7 33h24" stroke="#b94a5b" strokeWidth="1.300" />
    </svg>
  );
}

function PaintIcon() {
  return (
    <svg viewBox="0 0 40 40" className="size-10" aria-hidden="true">
      <path d="M14 9Q31 2 35 17q2 13-8 17-6 2-8-3-2-4-6-2-4 3-6 0Q4 27 6 24 0 22 2 18q3-7 12-9z" fill="#d9ebf7" stroke="#9dbbd2" />
      <circle cx="8" cy="20" r="3" fill="#dc3c34" />
      <circle cx="14" cy="14" r="3" fill="#4bb34c" />
      <circle cx="22" cy="11" r="3" fill="#f0bd2e" />
      <circle cx="18" cy="23" r="2.800" fill="#3f7cbf" />
      <path d="M33 9l2 1-12 27-3 1 1-4z" fill="#e28b3a" stroke="#a85e1d" strokeWidth=".6" />
      <path d="M30 3l3-2 7 3-4 7-5-2z" fill="#d19e63" />
    </svg>
  );
}

function FirefoxIcon() {
  return (
    <svg viewBox="0 0 40 40" className="size-[38px]" aria-hidden="true">
      <circle cx="21" cy="19" r="17.500" fill="#1d4f93" />
      <path d="M11 6q12-9 22 3l-4 8-6-3-5 1z" fill="#47a8e0" />
      <path d="M24 10l6 2-1 9-6 6-6-3 5-4z" fill="#123a72" />
      <path d="M34 7q7 8 5 18-4 13-18 14Q5 38 2 24q-1-9 3-16 2 2 3 4 3-3 7-4-2 4 2 7l5 1q0 3-5 4l-2 3q2 6 8 5 5-1 8-1-3 5-9 5 9 3 13-5 3-9-1-20z" fill="#e7641c" />
      <path d="M33 6q8 8 6 18-3 11-13 14 11-8 9-18 1-7-2-14z" fill="#ffcb2e" />
      <path d="M5 16q3-3 8-3l4 3" fill="none" stroke="#f79a35" strokeWidth="2" />
    </svg>
  );
}

const tasks: { label: string; icon: React.ReactNode; state?: "open" | "active" }[] = [
  { label: "Пуск", icon: <StartIcon /> },
  { label: "Internet Explorer", icon: <IeIcon /> },
  { label: "Камера", icon: <CameraIcon className="mt-1 h-7 w-10" /> },
  { label: "Блокнот", icon: <NotepadIcon /> },
  { label: "Файловый менеджер", icon: <FloppyIcon />, state: "open" },
  { label: "Paint", icon: <PaintIcon /> },
  { label: "Firefox", icon: <FirefoxIcon />, state: "open" },
  { label: "SimPe", icon: <SimpeLogo className="size-10" />, state: "active" },
  { label: "Проводник", icon: <LibrariesIcon className="size-10" />, state: "open" },
];

function Taskbar() {
  return (
    <footer className="flex h-12 shrink-0 items-center border-t border-[#47729f] bg-gradient-to-b from-[#508dca] to-[#4680c0] font-['Open_Sans',sans-serif] text-sm text-white">
      <div className="flex h-full gap-1">
        {tasks.map((t) => (
          <button
            key={t.label}
            aria-label={t.label}
            className={`flex h-[47px] w-[66px] items-center justify-center border ${
              t.state === "active" ? "border-white bg-[#9fbadc]" : t.state === "open" ? "border-[#9fc0e2] bg-[#719fd0]" : "border-transparent"
            }`}
          >
            {t.icon}
          </button>
        ))}
      </div>
      <div className="flex-1" />
      <button aria-label="Скрытые значки" className="mr-[17px]">
        <svg viewBox="0 0 10 5" className="h-[5px] w-[10px]" aria-hidden="true">
          <path d="M0 5h10L5 0z" fill="#fff" />
        </svg>
      </button>
      <CameraIcon className="mr-[11px] h-[14px] w-5" />
      <svg viewBox="0 0 20 20" className="mr-[9px] size-5" aria-hidden="true">
        <path d="M2 2q5-2 8 0t6 0v9q-4 2-7 0t-7 0z" fill="#fff" stroke="#fff" />
        <path d="M2 1v18" stroke="#fff" strokeWidth="2" />
        <path d="M3.500 12v7" stroke="#334455" strokeWidth=".8" />
        <circle cx="13.500" cy="14" r="5.300" fill="#d8352f" stroke="#fff" strokeWidth=".6" />
        <path d="M11 11.500l5 5M16 11.500l-5 5" stroke="#fff" strokeWidth="1.600" />
      </svg>
      <svg viewBox="0 0 20 20" className="mr-[9px] size-5" aria-hidden="true">
        <path d="M7 4h12v10H7zM9 18h9M13.500 14v4M3 6v11h5" fill="none" stroke="#fff" strokeWidth="1.700" />
        <path d="M1 1h4v5H1z" fill="#4680c0" stroke="#fff" strokeWidth="1.300" />
      </svg>
      <svg viewBox="0 0 20 20" className="mr-[18px] size-5" aria-hidden="true">
        <path d="M1 6h3l6-5v18l-6-5H1z" fill="#fff" stroke="#445566" strokeWidth=".5" />
        <path d="M12.500 7q2 3 0 6M15 5q3 5 0 10M17.500 3.500q3.500 6.500 0 13" fill="none" stroke="#dce9f6" strokeWidth="1.100" />
      </svg>
      <button className="mr-[22px]">РУС</button>
      <div className="mr-7 text-center leading-[22px]">
        <div>15:20</div>
        <div>18.08.2014</div>
      </div>
    </footer>
  );
}

export default function App() {
  return (
    <div className="relative flex min-h-screen flex-col overflow-hidden">
      <AppWindow />
      <Taskbar />
      <AddDialog />
      <FilterPopup />
    </div>
  );
}
